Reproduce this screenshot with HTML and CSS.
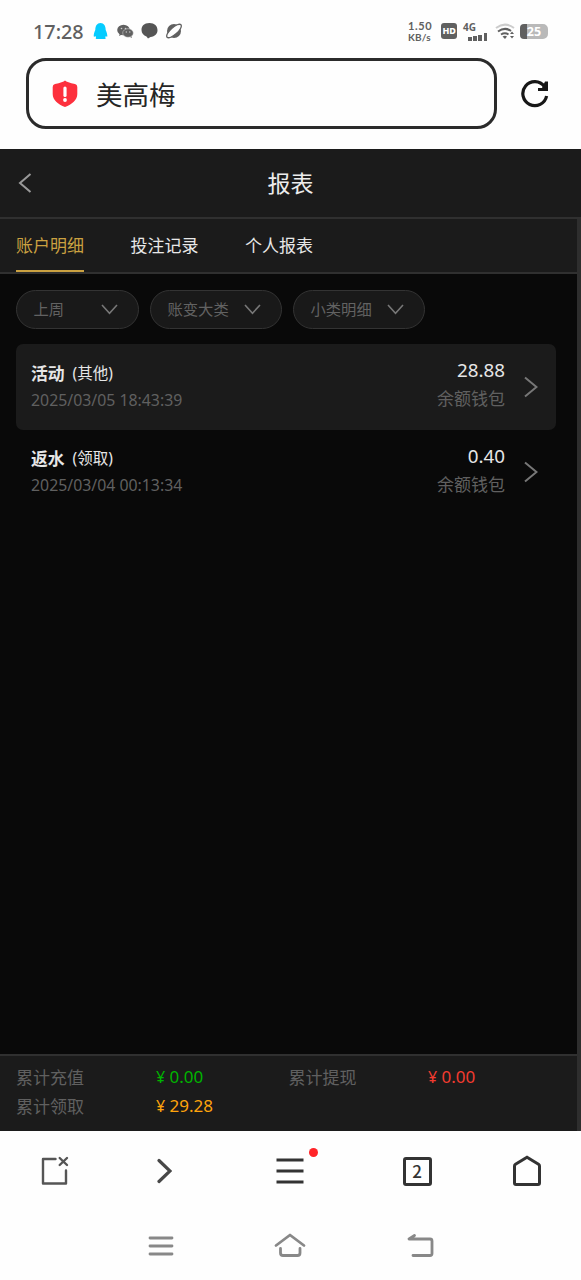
FILE: index.html
```html
<!DOCTYPE html>
<html lang="zh-CN">
<head>
<meta charset="utf-8">
<meta name="viewport" content="width=device-width, initial-scale=1">
<title>报表</title>
<link rel="stylesheet" href="styles.css">
</head>
<body>
<header class="status">
  <span class="clock">17:28</span>
  <svg class="notices" width="90" height="20" viewBox="0 0 90 20">
    <path d="M7.500 0C4 0 2.300 3 2.300 7C1.200 9 .5 12 .8 13.500Q1.500 14 2.500 13L3 14.500Q2 16 4.500 16H11Q13.500 16 12.300 14.500L12.800 13Q14 14 14.300 13.500C14.500 12 13.800 9 12.700 7C12.700 3 11 0 7.500 0Z" fill="#05ccff"/>
    <g fill="#606060"><ellipse cx="30.500" cy="7" rx="6.300" ry="5.300"/><path d="M27 10l-1 3 4-2zM38 12l1 3-4-2z"/><ellipse cx="35" cy="10" rx="5.300" ry="4.300" stroke="#ddd" stroke-width=".5"/></g>
    <g fill="#ccc"><circle cx="28.500" cy="5.500" r=".8"/><circle cx="32.500" cy="5.500" r=".8"/><circle cx="33.300" cy="9" r=".7"/><circle cx="36.800" cy="9" r=".7"/></g>
    <path d="M56.500 0C51 0 48.500 3 48.500 7C48.500 10 50.500 12.500 53.500 13.500L55 15.500L57.500 14C62 13.500 64.500 11 64.500 7.300C64.500 3 61.500 0 56.500 0Z" fill="#555"/>
    <circle cx="81" cy="8" r="7" fill="#606060"/>
    <ellipse cx="81" cy="8" rx="9.300" ry="3.500" transform="rotate(-42 81 8)" fill="#fefefe" stroke="#606060" stroke-width="1.300"/>
  </svg>
  <span class="speed"><b>1.50</b><b>KB/s</b></span>
  <span class="hd">HD</span>
  <span class="network"><b>4G</b><i class="bars"><i></i><i></i><i></i><i></i></i></span>
  <svg class="wifi" width="20" height="18" viewBox="0 0 20 18" fill="none" stroke-width="2">
    <path d="M1 5Q10-1.800 19 5" stroke="#ccc"/><path d="M3 8.500Q10 3.500 16 8M6 11.500Q10 9 13.500 11.500" stroke="#606060"/><path d="M7.500 13.500Q10 12 12 13.500L10 16Z" fill="#606060"/><path d="M15 11l2-2.500 2 2.500zM15 13l2 2.500 2-2.500z" fill="#606060"/>
  </svg>
  <span class="battery">25</span>
</header>

<div class="address">
  <div class="url">
    <svg width="26" height="28" viewBox="0 0 26 28"><path d="M13 .6Q15 2.500 23 4Q25.300 4.500 25.300 7V14C25.300 20 20 24.500 13 27C6 24.500 .7 20 .7 14V7Q.7 4.500 3 4Q11 2.500 13 .6Z" fill="#fd303d"/><path d="M13 8V15.500" stroke="#fff" stroke-width="3.200" stroke-linecap="round"/><circle cx="13" cy="20" r="1.900" fill="#fff"/></svg>
    <span>美高梅</span>
  </div>
  <svg class="reload" width="28" height="28" viewBox="0 0 28 28"><path d="M25.600 16A12 12 0 1 1 23.500 6.500" fill="none" stroke="#171717" stroke-width="3.200"/><path d="M24 1.500H27V11H17V8H21Z" fill="#171717"/></svg>
</div>

<main class="app">
  <div class="titlebar">
    <svg width="14" height="20" viewBox="0 0 14 20"><path d="M12.500 1L2 10L12.500 19" fill="none" stroke="#999" stroke-width="2"/></svg>
    <h1>报表</h1>
  </div>
  <div class="panel">
    <nav class="tabs">
      <a class="tab active">账户明细</a><a class="tab">投注记录</a><a class="tab">个人报表</a>
    </nav>
    <div class="content">
      <div class="filters">
        <div class="filter short"><span>上周</span><svg width="17" height="11" viewBox="0 0 17 11"><path d="M1 1L8.500 9.200L16 1"/></svg></div>
        <div class="filter"><span>账变大类</span><svg width="17" height="11" viewBox="0 0 17 11"><path d="M1 1L8.500 9.200L16 1"/></svg></div>
        <div class="filter"><span>小类明细</span><svg width="17" height="11" viewBox="0 0 17 11"><path d="M1 1L8.500 9.200L16 1"/></svg></div>
      </div>
      <div class="record shaded">
        <div class="info"><div class="kind"><b>活动</b><span>(其他)</span></div><time>2025/03/05 18:43:39</time></div>
        <div class="sum"><span class="amount">28.88</span><span class="wallet">余额钱包</span></div>
        <svg width="14" height="22" viewBox="0 0 14 22"><path d="M1 1.500L12.500 11L1 20.500"/></svg>
      </div>
      <div class="record">
        <div class="info"><div class="kind"><b>返水</b><span>(领取)</span></div><time>2025/03/04 00:13:34</time></div>
        <div class="sum"><span class="amount">0.40</span><span class="wallet">余额钱包</span></div>
        <svg width="14" height="22" viewBox="0 0 14 22"><path d="M1 1.500L12.500 11L1 20.500"/></svg>
      </div>
    </div>
    <div class="totals">
      <span>累计充值</span><span class="money green"><i>¥</i>0.00</span><span>累计提现</span><span class="money red"><i>¥</i>0.00</span>
      <span>累计领取</span><span class="money orange"><i>¥</i>29.28</span>
    </div>
  </div>
</main>

<nav class="browser-nav">
  <svg width="28" height="30" viewBox="0 0 28 30" fill="none" stroke="#555" stroke-width="2.400" stroke-linecap="round" stroke-linejoin="round"><path d="M14.500 3H2V27.500H25V14.500"/><path d="M18.700 2L26 9M26 2L18.700 9"/></svg>
  <svg width="16" height="26" viewBox="0 0 16 26" fill="none" stroke="#484848" stroke-width="3.200" stroke-linecap="round"><path d="M3 2.500L14 13L3 23.500"/></svg>
  <span class="menu"><svg width="28" height="26" viewBox="0 0 28 26"><path d="M.5 2H27.500M.5 13H27.500M.5 24H27.500" stroke="#333" stroke-width="3.200"/></svg><i class="dot"></i></span>
  <span class="pages">2</span>
  <svg width="30" height="32" viewBox="0 0 30 32"><path d="M2.500 11Q2.500 10 3.500 9.300L15 2.300L26.500 9.300Q27.500 10 27.500 11V28Q27.500 29.500 26 29.500H4Q2.500 29.500 2.500 28Z" fill="none" stroke="#333" stroke-width="3"/></svg>
</nav>
<nav class="system-nav">
  <svg width="26" height="24" viewBox="0 0 26 24"><path d="M2 4H24M2 12H24M2 20H24"/></svg>
  <svg width="32" height="26" viewBox="0 0 32 26"><path d="M2 12.500L16 2L30 12.500M6.500 15.500V20Q6.500 22.500 9 22.500H23.500Q26 22.500 26 20V15.500"/></svg>
  <svg width="28" height="26" viewBox="0 0 28 26"><path d="M8.500 2.500L3 6H24Q26 6 26 8V20.500Q26 22.500 24 22.500H7"/></svg>
</nav>
</body>
</html>
```
FILE: styles.css
```css
* { box-sizing: border-box; }
body {
  margin: 0;
  width: 581px;
  height: 1280px;
  overflow: hidden;
  background: #fefefe;
  font-family: "Noto Sans", "Noto Sans CJK SC", sans-serif;
  display: flex;
  flex-direction: column;
}
i { font-style: normal; }
svg { display: block; flex: none; }

.status {
  height: 58px;
  padding: 20px 0 0 33px;
  display: flex;
  align-items: flex-start;
  color: #606060;
}
.clock { width: 60px; font-size: 19.800px; line-height: 23px; font-weight: 500; }
.notices { margin-top: 3px; }
.speed {
  width: 26px;
  margin-left: 225px;
  display: flex;
  flex-direction: column;
}
.speed b {
  font: 700 11px/12px Lato, "Noto Sans", sans-serif;
  letter-spacing: .6px;
  white-space: nowrap;
}
.speed b:last-child { font-size: 10px; line-height: 11px; letter-spacing: .2px; }
.hd {
  width: 16px;
  height: 16px;
  margin: 3px 0 0 7px;
  border-radius: 3px;
  background: #606060;
  color: #fff;
  font-size: 9px;
  font-weight: 800;
  line-height: 16px;
  text-align: center;
  letter-spacing: -.3px;
}
.network {
  width: 25px;
  height: 19px;
  margin: 2px 0 0 6px;
  display: flex;
  align-items: flex-end;
}
.network b { font-size: 10px; line-height: 10px; align-self: flex-start; width: 5px; white-space: nowrap; }
.bars { display: flex; align-items: flex-end; gap: 1.500px; }
.bars i { width: 3.700px; height: 4px; background: #606060; }
.bars i:nth-child(2) { height: 5px; }
.bars i:nth-child(3) { height: 6px; }
.bars i:nth-child(4) { height: 8px; }
.wifi { margin: 3px 0 0 7px; }
.battery {
  width: 28px;
  height: 15px;
  margin: 4px 0 0 5px;
  border-radius: 4px 5px 5px 4px;
  background: linear-gradient(90deg, #606060 7px, #b9b9b9 7px);
  color: #fff;
  font-size: 12.500px;
  font-weight: 700;
  line-height: 15px;
  text-align: center;
}

.address { height: 91px; padding-left: 26px; display: flex; align-items: flex-start; }
.url {
  width: 471px;
  height: 71px;
  padding: 0 23px;
  border: 3px solid #2b2b2b;
  border-radius: 20px;
  display: flex;
  align-items: center;
  gap: 18px;
  color: #262626;
  font-size: 26.500px;
  line-height: 36px;
}
.url span { padding-top: 2px; }
.reload { margin: 22px 0 0 24px; }

.app { height: 982px; background: #1b1b1b; display: flex; flex-direction: column; }
.titlebar {
  height: 70px;
  padding: 0 18px;
  border-bottom: 2px solid #303030;
  display: grid;
  grid-template-columns: 14px 1fr 14px;
  align-items: center;
  text-align: center;
}
h1 { margin: 0; color: #ececec; font-size: 23px; line-height: 34px; font-weight: 400; }
.panel { flex: 1; border-right: 4px solid #2e2e2e; display: flex; flex-direction: column; }
.tabs {
  height: 55px;
  padding-left: 16px;
  border-bottom: 2px solid #303030;
  display: flex;
  gap: 46.500px;
}
.tab { height: 53px; color: #e8e8e8; font-size: 17px; line-height: 53px; border-bottom: 2.500px solid transparent; }
.tab.active { color: #caa141; border-color: #caa141; }
.content { flex: 1; background: #090909; padding: 16px 21px 0 16px; }
.filters { display: flex; gap: 11px; }
.filter {
  width: 132px;
  height: 39px;
  padding: 0 20px 0 16.500px;
  border: 1px solid #333;
  border-radius: 20px;
  background: #191919;
  display: flex;
  align-items: center;
  justify-content: space-between;
  color: #626262;
  font-size: 15.300px;
  line-height: 34px;
}
.filter span { padding-bottom: 2px; }
.filter.short { width: 123px; }
.filter path { fill: none; stroke: #777; stroke-width: 1.600; }
.record {
  height: 85.500px;
  padding: 0 18px 0 15px;
  border-radius: 7px;
  display: flex;
  align-items: center;
}
.shaded { margin-top: 15px; background: #1b1b1b; }
.info { flex: 1; }
.kind { display: flex; align-items: center; gap: 8px; color: #e6e6e6; line-height: 27px; }
.kind b { font-size: 16.800px; }
.kind span { font-size: 15.500px; }
time { display: block; color: #606060; font-size: 15.850px; line-height: 27px; }
.sum { display: flex; flex-direction: column; text-align: right; margin-right: 19px; padding-bottom: 3px; }
.amount { color: #e6e6e6; font-size: 18.800px; line-height: 27px; }
.wallet { color: #606060; font-size: 17px; line-height: 29px; }
.record path { fill: none; stroke: #777; stroke-width: 2; }
.totals {
  height: 77px;
  border-top: 2px solid #303030;
  padding: 7px 0 0 16px;
  display: grid;
  grid-template-columns: 140px 132.500px 139.500px 1fr;
  grid-auto-rows: 28.500px;
  color: #606060;
  font-size: 17px;
  line-height: 29px;
}
.money { display: flex; align-items: baseline; font-size: 17px; line-height: 28px; }
.money i { width: 13.500px; font-size: 16px; }
.green { color: #00b400; }
.red { color: #f33b30; }
.orange { color: #ffa40c; }

.browser-nav {
  height: 80px;
  display: grid;
  grid-template-columns: 109px 110px 142px 112px 107px;
  place-items: center;
}
.menu { position: relative; }
.dot { position: absolute; right: -14px; top: -10px; width: 9px; height: 9px; border-radius: 50%; background: #ff2428; }
.pages {
  width: 29px;
  height: 29px;
  border: 3px solid #333;
  border-radius: 3px;
  color: #333;
  font-family: "Noto Sans CJK SC", sans-serif;
  font-size: 17px;
  font-weight: 500;
  line-height: 21px;
  text-align: center;
}
.system-nav {
  height: 69px;
  padding: 0 96.500px;
  display: grid;
  grid-template-columns: repeat(3, 1fr);
  place-items: center;
}
.system-nav path { fill: none; stroke: #888; stroke-width: 2.800; stroke-linecap: round; stroke-linejoin: round; }
```
